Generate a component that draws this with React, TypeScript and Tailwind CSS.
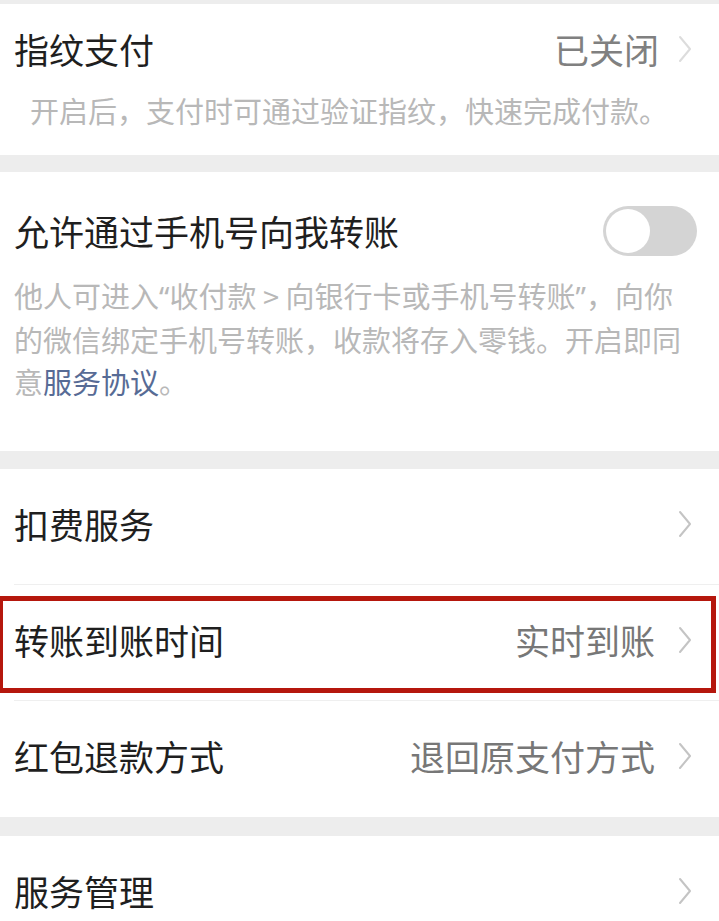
import React from "react";

const Chevron = ({ light }: { light?: boolean }) => (
  <svg width="16" height="28" viewBox="0 0 16 28" className="shrink-0">
    <polyline
      points="3,2 13,14 3,26"
      fill="none"
      stroke={light ? "#dcdcdc" : "#c4c4c4"}
      strokeWidth="2"
      strokeLinecap="round"
      strokeLinejoin="round"
    />
  </svg>
);

const Row = ({
  title,
  value,
  divider,
  tall,
  children,
}: {
  title: string;
  value?: string;
  divider?: boolean;
  tall?: boolean;
  children?: React.ReactNode;
}) => (
  <div className="relative">
    <div
      className={
        tall
          ? "flex h-[116px] items-center pb-[6px] pl-[14px] pr-[26px]"
          : "flex h-[115px] items-center pb-[6px] pl-[14px] pr-[26px]"
      }
    >
      <div className="flex-1 text-[35px] leading-[48px] text-[#1f1f1f]">{title}</div>
      {value && (
        <div className="mr-[22px] text-[35px] leading-[48px] text-[#777777]">{value}</div>
      )}
      <Chevron />
    </div>
    {divider && <div className="ml-[14px] h-px bg-[#efefef]" />}
    {children}
  </div>
);

const Q = ({ c }: { c: string }) => (
  <span style={{ fontFamily: '"Noto Sans", sans-serif' }}>{c}</span>
);

export default function App() {
  return (
    <div
      className="min-h-[921px] w-full overflow-hidden bg-[#ededed] pt-[4px]"
      style={{ fontFamily: '"Noto Sans CJK SC", "Noto Sans", sans-serif' }}
    >
      {/* Section 1 */}
      <div className="bg-white pb-[24px] pt-[21px]">
        <div className="flex items-center pl-[14px] pr-[26px]">
          <div className="flex-1 text-[35px] leading-[48px] text-[#1f1f1f]">指纹支付</div>
          <div className="mr-[18px] text-[35px] leading-[48px] text-[#808080]">已关闭</div>
          <Chevron light />
        </div>
        <div className="mt-[16px] pl-[30px] text-[29px] leading-[42px] text-[#b8b8b8]">
          开启后，支付时可通过验证指纹，快速完成付款。
        </div>
      </div>

      {/* Section 2 */}
      <div className="mt-[17px] bg-white pb-[49px] pt-[34px]">
        <div className="flex items-center pl-[14px] pr-[22px]">
          <div className="flex-1 text-[35px] leading-[48px] text-[#1f1f1f]">
            允许通过手机号向我转账
          </div>
          <div className="flex h-[50px] w-[94px] items-center rounded-full bg-[#d4d4d4] p-[3px]">
            <div className="h-[44px] w-[44px] rounded-full bg-white" />
          </div>
        </div>
        <div className="mt-[18px] pl-[14px] pr-[10px] text-[29px] leading-[42px] text-[#b8b8b8]">
          <div className="whitespace-nowrap">
            他人可进入<Q c="“" />收付款 &gt; 向银行卡或手机号转账<Q c="”" />，向你
          </div>
          <div className="whitespace-nowrap">的微信绑定手机号转账，收款将存入零钱。开启即同</div>
          <div className="whitespace-nowrap">
            意<span className="text-[#576b95]">服务协议</span>。
          </div>
        </div>
      </div>

      {/* Section 3 */}
      <div className="mt-[18px] bg-white">
        <Row title="扣费服务" divider />
        <Row title="转账到账时间" value="实时到账" divider>
          <div className="pointer-events-none absolute bottom-[8px] left-[-2px] right-[3px] top-[11px] border-[5px] border-[#b5170d]" />
        </Row>
        <Row title="红包退款方式" value="退回原支付方式" tall />
      </div>

      {/* Section 4 */}
      <div className="mt-[19px] bg-white">
        <Row title="服务管理" tall />
      </div>
    </div>
  );
}
